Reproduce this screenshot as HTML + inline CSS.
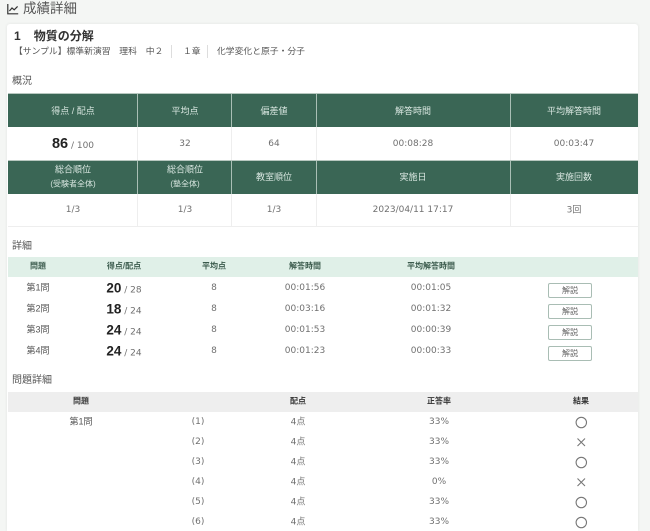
<!DOCTYPE html>
<html lang="ja"><head><meta charset="utf-8"><title>成績詳細</title>
<style>
html,body{margin:0;padding:0;width:650px;height:531px;overflow:hidden}
body{position:relative;background:#f4f6f4;font-family:"DejaVu Sans","Noto Sans CJK JP",sans-serif;color:#666;font-size:9px}
.a{position:absolute}
.c{position:absolute;transform:translate(-50%,-50%);white-space:nowrap;text-align:center}
.card{position:absolute;left:7px;top:24px;width:631px;height:507px;background:#fff;border-radius:3px 3px 0 0;box-shadow:0 0 3px rgba(0,0,0,.08)}
.g{position:absolute;background:#3a6655;box-sizing:border-box;border-top:1px solid #b8c8c0}
.l{position:absolute;width:1px}
.h{color:#d8e6e0;font-size:9px;line-height:14px;margin-top:1px}
.h small{font-size:8px}
.j{color:#555;font-family:"Liberation Sans","Noto Sans CJK JP",sans-serif}
.sec{position:absolute;left:12px;font-size:10px;color:#555;font-family:"Liberation Sans","Noto Sans CJK JP",sans-serif;line-height:12px}
.t{color:#3a5a4c;font-size:8px;font-weight:bold;font-family:"Liberation Sans","Noto Sans CJK JP",sans-serif}
.k{color:#333;font-size:8px;font-weight:bold;font-family:"Liberation Sans","Noto Sans CJK JP",sans-serif}
.n{font-size:9px;color:#707070;margin-top:1px}
.p{font-size:9px;color:#707070}
.b{color:#222;font-weight:bold;font-size:13.5px;font-family:"Liberation Sans",sans-serif}
.bb{font-size:14.5px}
.btn{position:absolute;left:548px;width:44px;height:15px;box-sizing:border-box;border:1px solid #a9bdb4;border-radius:2px;background:#fff;color:#666;font-size:8px;line-height:13px;text-align:center;font-family:"Liberation Sans","Noto Sans CJK JP",sans-serif}
svg{position:absolute}
</style></head><body>
<svg style="left:7px;top:3px" width="12" height="12" viewBox="0 0 12 12" fill="none" stroke="#333" stroke-width="1.2"><path d="M.8 1v9.8h10.4"/><path d="M2.4 8l2.6-3 2.2 1.8 3.4-3.4"/></svg>
<div class="a" style="left:23px;top:0;font-size:13.5px;line-height:17px;color:#555;font-family:'Liberation Sans','Noto Sans CJK JP',sans-serif">成績詳細</div>
<div class="card"></div>
<div class="a" style="left:14px;top:29px;font-size:12px;line-height:15px;font-weight:bold;color:#333;font-family:'Liberation Sans','Noto Sans CJK JP',sans-serif;white-space:pre">1<span style="margin-left:13px">物質の分解</span></div>
<div class="a j" style="left:14px;top:45px;font-size:8.8px;line-height:13px;white-space:nowrap">【サンプル】標準新演習　理科　中２</div>
<div class="a" style="left:171px;top:45px;width:1px;height:13px;background:#ddd"></div>
<div class="a j" style="left:183px;top:45px;font-size:8.8px;line-height:13px;white-space:nowrap">１章</div>
<div class="a" style="left:207px;top:45px;width:1px;height:13px;background:#ddd"></div>
<div class="a j" style="left:217px;top:45px;font-size:8.8px;line-height:13px;white-space:nowrap">化学変化と原子・分子</div>

<div class="sec" style="top:76px">概況</div>
<div class="g" style="left:8px;top:93px;width:630px;height:34px"></div>
<div class="g" style="left:8px;top:160px;width:630px;height:34px"></div>
<div class="l" style="left:137px;top:94px;height:33px;background:#a9bfb5"></div>
<div class="l" style="left:231px;top:94px;height:33px;background:#a9bfb5"></div>
<div class="l" style="left:316px;top:94px;height:33px;background:#a9bfb5"></div>
<div class="l" style="left:510px;top:94px;height:33px;background:#a9bfb5"></div>
<div class="l" style="left:137px;top:161px;height:33px;background:#a9bfb5"></div>
<div class="l" style="left:231px;top:161px;height:33px;background:#a9bfb5"></div>
<div class="l" style="left:316px;top:161px;height:33px;background:#a9bfb5"></div>
<div class="l" style="left:510px;top:161px;height:33px;background:#a9bfb5"></div>
<div class="l" style="left:137px;top:127px;height:33px;background:#eee"></div>
<div class="l" style="left:231px;top:127px;height:33px;background:#eee"></div>
<div class="l" style="left:316px;top:127px;height:33px;background:#eee"></div>
<div class="l" style="left:510px;top:127px;height:33px;background:#eee"></div>
<div class="l" style="left:137px;top:194px;height:32px;background:#eee"></div>
<div class="l" style="left:231px;top:194px;height:32px;background:#eee"></div>
<div class="l" style="left:316px;top:194px;height:32px;background:#eee"></div>
<div class="l" style="left:510px;top:194px;height:32px;background:#eee"></div>
<div class="a" style="left:8px;top:226px;width:630px;height:1px;background:#eee"></div>

<div class="c h j" style="left:73px;top:110px;color:#d8e6e0">得点 / 配点</div>
<div class="c h j" style="left:185px;top:110px;color:#d8e6e0">平均点</div>
<div class="c h j" style="left:274px;top:110px;color:#d8e6e0">偏差値</div>
<div class="c h j" style="left:413px;top:110px;color:#d8e6e0">解答時間</div>
<div class="c h j" style="left:574px;top:110px;color:#d8e6e0">平均解答時間</div>

<div class="c n" style="left:73px;top:143px"><span class="b bb">86</span> / 100</div>
<div class="c n" style="left:185px;top:143px">32</div>
<div class="c n" style="left:274px;top:143px">64</div>
<div class="c n" style="left:413px;top:143px">00:08:28</div>
<div class="c n" style="left:574px;top:143px">00:03:47</div>

<div class="c h j" style="left:73px;top:176px;color:#d8e6e0">総合順位<br><small>(受験者全体)</small></div>
<div class="c h j" style="left:185px;top:176px;color:#d8e6e0">総合順位<br><small>(塾全体)</small></div>
<div class="c h j" style="left:274px;top:176px;color:#d8e6e0">教室順位</div>
<div class="c h j" style="left:413px;top:176px;color:#d8e6e0">実施日</div>
<div class="c h j" style="left:574px;top:176px;color:#d8e6e0">実施回数</div>

<div class="c n" style="left:73px;top:209px">1/3</div>
<div class="c n" style="left:185px;top:209px">1/3</div>
<div class="c n" style="left:274px;top:209px">1/3</div>
<div class="c n" style="left:413px;top:209px">2023/04/11 17:17</div>
<div class="c p" style="left:574px;top:209px">3回</div>

<div class="sec" style="top:241px">詳細</div>
<div class="a" style="left:8px;top:257px;width:630px;height:20px;background:#e0f0e8"></div>
<div class="c t" style="left:38px;top:266px">問題</div>
<div class="c t" style="left:124px;top:266px">得点/配点</div>
<div class="c t" style="left:214px;top:266px">平均点</div>
<div class="c t" style="left:305px;top:266px">解答時間</div>
<div class="c t" style="left:431px;top:266px">平均解答時間</div>

<div class="c j" style="left:38px;top:287px;font-size:9px">第1問</div>
<div class="c n" style="left:124px;top:287px"><span class="b">20</span> / 28</div>
<div class="c n" style="left:214px;top:287px">8</div>
<div class="c n" style="left:305px;top:287px">00:01:56</div>
<div class="c n" style="left:431px;top:287px">00:01:05</div>
<div class="btn" style="top:283px">解説</div>

<div class="c j" style="left:38px;top:308px;font-size:9px">第2問</div>
<div class="c n" style="left:124px;top:308px"><span class="b">18</span> / 24</div>
<div class="c n" style="left:214px;top:308px">8</div>
<div class="c n" style="left:305px;top:308px">00:03:16</div>
<div class="c n" style="left:431px;top:308px">00:01:32</div>
<div class="btn" style="top:304px">解説</div>

<div class="c j" style="left:38px;top:329px;font-size:9px">第3問</div>
<div class="c n" style="left:124px;top:329px"><span class="b">24</span> / 24</div>
<div class="c n" style="left:214px;top:329px">8</div>
<div class="c n" style="left:305px;top:329px">00:01:53</div>
<div class="c n" style="left:431px;top:329px">00:00:39</div>
<div class="btn" style="top:325px">解説</div>

<div class="c j" style="left:38px;top:350px;font-size:9px">第4問</div>
<div class="c n" style="left:124px;top:350px"><span class="b">24</span> / 24</div>
<div class="c n" style="left:214px;top:350px">8</div>
<div class="c n" style="left:305px;top:350px">00:01:23</div>
<div class="c n" style="left:431px;top:350px">00:00:33</div>
<div class="btn" style="top:346px">解説</div>

<div class="sec" style="top:375px">問題詳細</div>
<div class="a" style="left:8px;top:392px;width:630px;height:20px;background:#eee"></div>
<div class="c k" style="left:81px;top:401px">問題</div>
<div class="c k" style="left:298px;top:401px">配点</div>
<div class="c k" style="left:439px;top:401px">正答率</div>
<div class="c k" style="left:581px;top:401px">結果</div>

<div class="c j" style="left:81px;top:421px;font-size:9px">第1問</div>
<div class="c n" style="left:198px;top:421px">(1)</div><div class="c p" style="left:298px;top:421px">4点</div><div class="c n" style="left:439px;top:421px">33%</div>
<div class="c n" style="left:198px;top:441px">(2)</div><div class="c p" style="left:298px;top:441px">4点</div><div class="c n" style="left:439px;top:441px">33%</div>
<div class="c n" style="left:198px;top:461px">(3)</div><div class="c p" style="left:298px;top:461px">4点</div><div class="c n" style="left:439px;top:461px">33%</div>
<div class="c n" style="left:198px;top:481px">(4)</div><div class="c p" style="left:298px;top:481px">4点</div><div class="c n" style="left:439px;top:481px">0%</div>
<div class="c n" style="left:198px;top:501px">(5)</div><div class="c p" style="left:298px;top:501px">4点</div><div class="c n" style="left:439px;top:501px">33%</div>
<div class="c n" style="left:198px;top:521px">(6)</div><div class="c p" style="left:298px;top:521px">4点</div><div class="c n" style="left:439px;top:521px">33%</div>

<svg style="left:0;top:0" width="650" height="531" fill="none" stroke="#777" stroke-width="1.1">
<circle cx="581.3" cy="422.5" r="5.2"/>
<path d="M577.5 438.5l7.5 7.5M585 438.5l-7.5 7.5"/>
<circle cx="581.3" cy="462.5" r="5.2"/>
<path d="M577.5 478.5l7.5 7.5M585 478.5l-7.5 7.5"/>
<circle cx="581.3" cy="502.5" r="5.2"/>
<circle cx="581.3" cy="522.5" r="5.2"/>
</svg>
</body></html>
